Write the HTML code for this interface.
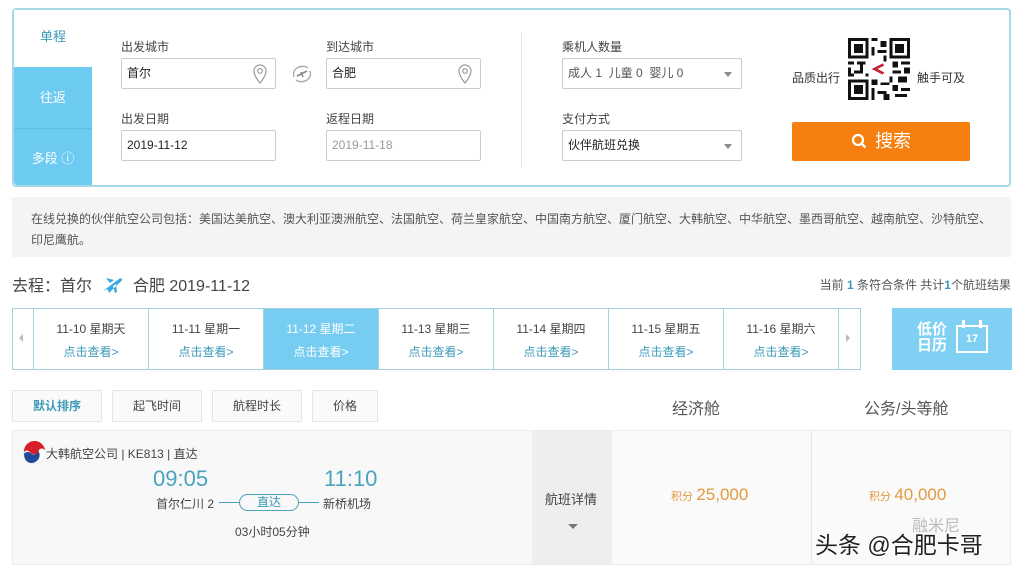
<!DOCTYPE html>
<html><head><meta charset="utf-8"><style>
*{margin:0;padding:0;box-sizing:border-box}
body{width:1019px;height:571px;background:#fff;position:relative;overflow:hidden;font-family:"Liberation Sans","Noto Sans CJK SC",sans-serif;color:#333;font-size:12px}
.a{position:absolute}
.box{left:12px;top:8px;width:999px;height:179px;border:2px solid #a6d8e6;border-radius:4px}
.tab{left:14px;width:78px;background:#6dcbf2;color:#fff;font-size:13px;text-align:center}
.lbl{font-size:12px;color:#444}
.inp{height:31px;border:1px solid #ccc;border-radius:2px;font-size:12px;line-height:29px;padding-left:5px;color:#222;background:#fff}
.cell{top:309px;height:60px;border-right:1px solid #a6d0de;text-align:center;width:115px}
.cell .d{margin-top:11px;font-size:12px;color:#444}
.cell .l{margin-top:6px;font-size:12px;color:#3c9ab8}
.sort{top:390px;height:32px;border:1px solid #e6e6e6;background:#fafafa;text-align:center;line-height:30px;font-size:12px;color:#444}
</style></head><body>
<div class="a box"></div>
<div class="a tab" style="top:10px;height:57px;background:#fff;color:#3a9ab8;line-height:54px">单程</div>
<div class="a tab" style="top:67px;height:61px;line-height:61px">往返</div>
<div class="a tab" style="top:128px;height:57px;line-height:60px;border-top:1px solid #5fbde4;border-bottom-left-radius:3px">多段 ⓘ</div>

<div class="a lbl" style="left:121px;top:38px">出发城市</div>
<div class="a inp" style="left:121px;top:58px;width:155px">首尔</div>
<svg class="a" style="left:251px;top:63px" width="18" height="22" viewBox="0 0 18 22"><path d="M9 20C4 14 3 11 3 8a6 6 0 0 1 12 0c0 3-1 6-6 12z" fill="none" stroke="#999" stroke-width="1.2"/><circle cx="9" cy="8" r="2.3" fill="none" stroke="#999" stroke-width="1.2"/></svg>
<svg class="a" style="left:290px;top:63px" width="24" height="22" viewBox="0 0 24 22"><path d="M4 14a9 8 0 0 1 14-9M20 8a9 8 0 0 1-14 9" fill="none" stroke="#aaa" stroke-width="1.3"/><path d="M7 13l10-5M11 9l2 5" stroke="#888" stroke-width="1.6"/></svg>
<div class="a lbl" style="left:326px;top:38px">到达城市</div>
<div class="a inp" style="left:326px;top:58px;width:155px">合肥</div>
<svg class="a" style="left:456px;top:63px" width="18" height="22" viewBox="0 0 18 22"><path d="M9 20C4 14 3 11 3 8a6 6 0 0 1 12 0c0 3-1 6-6 12z" fill="none" stroke="#999" stroke-width="1.2"/><circle cx="9" cy="8" r="2.3" fill="none" stroke="#999" stroke-width="1.2"/></svg>
<div class="a lbl" style="left:121px;top:110px">出发日期</div>
<div class="a inp" style="left:121px;top:130px;width:155px">2019-11-12</div>
<div class="a lbl" style="left:326px;top:110px">返程日期</div>
<div class="a inp" style="left:326px;top:130px;width:155px;color:#999">2019-11-18</div>
<div class="a" style="left:521px;top:32px;height:135px;border-left:1px dotted #ccc"></div>

<div class="a lbl" style="left:562px;top:38px">乘机人数量</div>
<div class="a inp" style="left:562px;top:58px;width:180px;color:#555">成人 1&nbsp; 儿童 0&nbsp; 婴儿 0</div>
<div class="a" style="left:724px;top:72px;border:4px solid transparent;border-top:5px solid #888"></div>
<div class="a lbl" style="left:562px;top:110px">支付方式</div>
<div class="a inp" style="left:562px;top:130px;width:180px">伙伴航班兑换</div>
<div class="a" style="left:724px;top:144px;border:4px solid transparent;border-top:5px solid #888"></div>

<div class="a" style="left:792px;top:69px;font-size:12px;color:#333">品质出行</div>
<div class="a" style="left:917px;top:69px;font-size:12px;color:#333">触手可及</div>
<svg class="a" style="left:848px;top:38px" width="62" height="62" viewBox="0 0 21 21" shape-rendering="crispEdges">
<rect width="21" height="21" fill="#fff"/>
<g fill="#111">
<path d="M0 0h7v7h-7zM14 0h7v7h-7zM0 14h7v7h-7z"/>
</g>
<g fill="#fff"><path d="M1 1h5v5h-5zM15 1h5v5h-5zM1 15h5v5h-5z"/></g>
<g fill="#111"><path d="M2 2h3v3h-3zM16 2h3v3h-3zM2 16h3v3h-3z"/>
<path d="M8 0h2v1h-2zM11 1h2v2h-2zM8 3h1v3h-1zM10 4h3v1h-3zM12 6h1v2h-1zM0 8h2v1h-2zM3 8h3v1h-3zM0 10h1v3h-1zM2 11h3v1h-3zM4 9h1v2h-1zM15 8h2v2h-2zM18 8h3v1h-3zM19 10h2v2h-2zM15 11h3v1h-3zM17 13h3v2h-3zM8 14h2v2h-2zM11 15h3v1h-3zM8 17h1v4h-1zM10 18h3v1h-3zM12 19h2v2h-2zM15 16h2v2h-2zM18 17h3v1h-3zM16 19h4v1h-4zM14 13h1v2h-1zM6 12h1v1h-1zM1 12h1v1h-1z"/></g>
<rect x="8" y="8" width="5" height="5" fill="#fff"/><path d="M12 9l-3 1.5 3 1.5" stroke="#c8283c" stroke-width="0.9" fill="none"/>
</svg>
<div class="a" style="left:792px;top:122px;width:178px;height:39px;background:#f77f0f;border-radius:2px;color:#fff;font-size:18px;line-height:39px;text-align:center"><svg width="16" height="16" viewBox="0 0 16 16" style="vertical-align:-2px;margin-right:8px"><circle cx="7" cy="7" r="5" fill="none" stroke="#fff" stroke-width="2.2"/><path d="M10.5 10.5l4 4" stroke="#fff" stroke-width="2.4"/></svg>搜索</div>

<div class="a" style="left:12px;top:197px;width:999px;height:60px;background:#f4f4f4;padding:12px 0 0 19px;font-size:12px;line-height:21px;color:#555">在线兑换的伙伴航空公司包括：美国达美航空、澳大利亚澳洲航空、法国航空、荷兰皇家航空、中国南方航空、厦门航空、大韩航空、中华航空、墨西哥航空、越南航空、沙特航空、<br>印尼鹰航。</div>

<div class="a" style="left:12px;top:272px;font-size:16px;color:#444">去程：首尔 <svg width="24" height="22" viewBox="0 0 24 22" style="vertical-align:-5px;margin:0 4px"><path d="M3 17l16-12c2-1.5 4 0 2.5 1.8L9 19l-1.5-4zM6 4l8 2-4 3zM13 12l2 7 2-1-1-8z" fill="#3aa8e0"/></svg> 合肥 2019-11-12</div>
<div class="a" style="right:8px;top:276px;font-size:12px;color:#555">当前 <b style="color:#3c9ab8">1</b> 条符合条件 共计<b style="color:#3c9ab8">1</b>个航班结果</div>

<div class="a" style="left:12px;top:308px;width:849px;height:62px;border:1px solid #a6d0de"></div>
<div class="a" style="left:13px;top:309px;width:21px;height:60px;border-right:1px solid #a6d0de"></div>
<div class="a" style="left:19px;top:334px;border:4px solid transparent;border-right:4px solid #bbb;border-left:0"></div>
<div class="a" style="left:838px;top:309px;width:22px;height:60px;border-left:1px solid #a6d0de"></div>
<div class="a" style="left:846px;top:334px;border:4px solid transparent;border-left:4px solid #bbb;border-right:0"></div>
<div class="a cell" style="left:34px"><div class="d">11-10 星期天</div><div class="l">点击查看&gt;</div></div>
<div class="a cell" style="left:149px"><div class="d">11-11 星期一</div><div class="l">点击查看&gt;</div></div>
<div class="a cell" style="left:264px;background:#76cdf1"><div class="d" style="color:#fff">11-12 星期二</div><div class="l" style="color:#fff">点击查看&gt;</div></div>
<div class="a cell" style="left:379px"><div class="d">11-13 星期三</div><div class="l">点击查看&gt;</div></div>
<div class="a cell" style="left:494px"><div class="d">11-14 星期四</div><div class="l">点击查看&gt;</div></div>
<div class="a cell" style="left:609px"><div class="d">11-15 星期五</div><div class="l">点击查看&gt;</div></div>
<div class="a cell" style="left:724px;width:114px;border-right:0"><div class="d">11-16 星期六</div><div class="l">点击查看&gt;</div></div>

<div class="a" style="left:892px;top:308px;width:120px;height:62px;background:#7fd0f2"></div>
<div class="a" style="left:917px;top:322px;color:#fff;font-size:15px;font-weight:bold;line-height:16px">低价<br>日历</div>
<div class="a" style="left:956px;top:325px;width:32px;height:28px;border:2px solid #fff;color:#fff;font-size:11px;text-align:center;line-height:24px;font-weight:bold">17</div>
<div class="a" style="left:962px;top:320px;width:3px;height:8px;background:#fff"></div>
<div class="a" style="left:979px;top:320px;width:3px;height:8px;background:#fff"></div>

<div class="a sort" style="left:12px;width:90px;color:#3c9ab8;font-weight:bold">默认排序</div>
<div class="a sort" style="left:112px;width:90px">起飞时间</div>
<div class="a sort" style="left:212px;width:90px">航程时长</div>
<div class="a sort" style="left:312px;width:66px">价格</div>
<div class="a" style="left:672px;top:395px;font-size:16px;color:#555">经济舱</div>
<div class="a" style="left:864px;top:395px;font-size:16px;color:#555">公务/头等舱</div>

<div class="a" style="left:12px;top:430px;width:999px;height:135px;background:#f8f8f8;border:1px solid #ececec"></div>
<div class="a" style="left:612px;top:431px;width:398px;height:133px;background:#fafafa"></div>
<div class="a" style="left:532px;top:431px;width:80px;height:133px;background:#eeeeee"></div>
<div class="a" style="left:811px;top:431px;height:133px;border-left:1px solid #e6e6e6"></div>
<div class="a" style="left:545px;top:489px;font-size:13px;color:#444">航班详情</div>
<div class="a" style="left:568px;top:524px;border:5px solid transparent;border-top:5px solid #777"></div>
<svg class="a" style="left:23px;top:441px" width="23" height="23" viewBox="0 0 22 22"><circle cx="11" cy="11" r="10.5" fill="#fff" stroke="#ddd" stroke-width=".5"/><path d="M1 11A10 10 0 0 1 21 9c-2-3-6-2-6 1s-5 4-8 1-5-2-6 0z" fill="#d71e28"/><path d="M1 12c2-2 5-2 7 0s5 1 7-2c3 6-2 11-7 11S1 17 1 12z" fill="#1f4a9a"/></svg>
<div class="a" style="left:46px;top:445px;font-size:12px;color:#444">大韩航空公司 | KE813 | 直达</div>
<div class="a" style="left:153px;top:466px;font-size:22px;color:#4aa3bd">09:05</div>
<div class="a" style="left:324px;top:466px;font-size:22px;color:#4aa3bd">11:10</div>
<div class="a" style="left:156px;top:495px;font-size:12px;color:#444">首尔仁川 2</div>
<div class="a" style="left:219px;top:502px;width:100px;border-top:1px solid #4aa3bd"></div>
<div class="a" style="left:239px;top:494px;width:60px;height:17px;border:1px solid #4aa3bd;border-radius:9px;background:#f8f8f8;text-align:center;line-height:15px;font-size:12px;color:#3c9ab8">直达</div>
<div class="a" style="left:323px;top:495px;font-size:12px;color:#444">新桥机场</div>
<div class="a" style="left:235px;top:523px;font-size:12px;color:#444">03小时05分钟</div>
<div class="a" style="left:671px;top:485px;color:#e19a3e"><span style="font-size:11px">积分</span> <span style="font-size:17px">25,000</span></div>
<div class="a" style="left:869px;top:485px;color:#e19a3e"><span style="font-size:11px">积分</span> <span style="font-size:17px">40,000</span></div>
<div class="a" style="left:912px;top:512px;font-size:16px;color:#bbb">融米尼</div>
<div class="a" style="left:815px;top:526px;font-size:23px;color:#222;text-shadow:0 0 2px #fff,0 0 2px #fff">头条 @合肥卡哥</div>
</body></html>
